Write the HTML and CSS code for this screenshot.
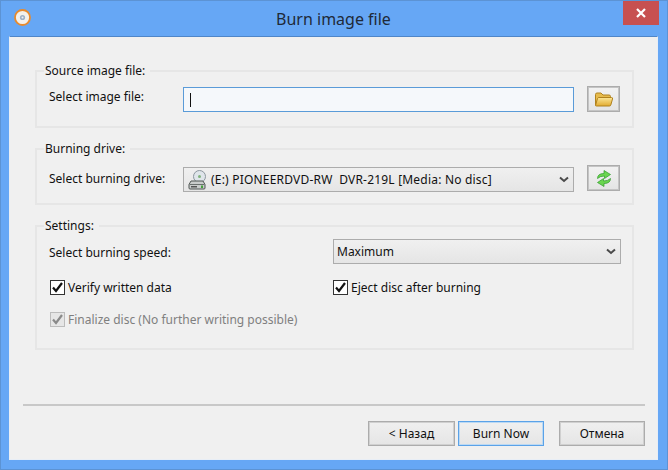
FILE: index.html
```html
<!DOCTYPE html>
<html lang="en">
<head>
<meta charset="utf-8">
<title>Burn image file</title>
<link rel="stylesheet" href="styles.css">
</head>
<body>
<div class="window">
  <header class="titlebar">
    <svg class="app-icon" width="17" height="17" viewBox="0 0 17 17"><circle cx="8.5" cy="8.5" r="7.5" fill="#f4f1ec" stroke="#e88a2c" stroke-width="1.8"/><circle cx="8.5" cy="8.5" r="2.6" fill="#9fb0c6"/><circle cx="8.5" cy="8.5" r="1" fill="#eef2f6"/></svg>
    <h1 class="title">Burn image file</h1>
    <div class="close"><svg width="10" height="10" viewBox="0 0 10 10"><path d="M1 1l8 8M9 1l-8 8" stroke="#fff" stroke-width="2.2"/></svg></div>
  </header>
  <main class="client">
    <fieldset class="group group-source">
      <legend>Source image file:</legend>
      <div class="row">
        <span class="label label-source">Select image file:</span>
        <div class="input"><span class="caret"></span></div>
        <button class="tool tool-browse">
          <svg width="20" height="17" viewBox="0 0 20 17"><defs><linearGradient id="fo" x1="0" y1="0" x2="0" y2="1"><stop offset="0" stop-color="#fbe696"/><stop offset="1" stop-color="#e2ab30"/></linearGradient></defs><path d="M1.500 14V3.500q0-1.500 1.500-1.500h4l2 2h6q1.500 0 1.500 1.500V7z" fill="#e6bb4c" stroke="#b0821e"/><path d="M1.500 14.500L3.500 7.500q.3-1 1.300-1h12.700q1.500 0 1 1.500l-1.700 6q-.3 1-1.300 1H2.500q-1 0-1-.5z" fill="url(#fo)" stroke="#b0821e"/></svg>
        </button>
      </div>
    </fieldset>
    <fieldset class="group group-drive">
      <legend>Burning drive:</legend>
      <div class="row">
        <span class="label label-drive">Select burning drive:</span>
        <div class="select select-drive">
          <svg width="20" height="22" viewBox="0 0 20 22"><circle cx="12.500" cy="7.500" r="6" fill="#dfe5ea" stroke="#8d979f"/><circle cx="12.500" cy="7.500" r="1.500" fill="#7fb37c"/><path d="M2 15.500L4 12h12l2 3.500V19q0 1-1 1H3q-1 0-1-1z" fill="#c9cccb" stroke="#4f5553"/><path d="M2.500 15.500h15" stroke="#6a706e"/><rect x="4" y="17" width="6" height="1.500" fill="#555"/><rect x="14" y="16.500" width="2" height="2.500" fill="#46a13e"/></svg>
          <span class="select-text select-text-drive">(E:) PIONEERDVD-RW&nbsp; DVR-219L [Media: No disc]</span>
          <svg class="chev" width="10" height="7" viewBox="0 0 10 7"><path d="M1 1.500l4 3.500 4-3.500" fill="none" stroke="#4a4a4a" stroke-width="2"/></svg>
        </div>
        <button class="tool tool-refresh">
          <svg width="16" height="19" viewBox="0 0 16 19"><path d="M1.500 9.500Q1.500 4.500 8 4.500V1.500L14.500 5.500 8.500 9.500V7Q4 7 1.500 9.500z" fill="#6ad64f" stroke="#2f9a2b" stroke-width=".7"/><path d="M14.500 9.500Q14.500 14.500 8 14.500v3L1.500 13.500 7.500 9.500V12Q12 12 14.500 9.500z" fill="#6ad64f" stroke="#2f9a2b" stroke-width=".7"/></svg>
        </button>
      </div>
    </fieldset>
    <fieldset class="group group-settings">
      <legend>Settings:</legend>
      <div class="settings">
        <span class="label label-speed">Select burning speed:</span>
        <div class="select select-speed">
          <span class="select-text">Maximum</span>
          <svg class="chev" width="10" height="7" viewBox="0 0 10 7"><path d="M1 1.500l4 3.500 4-3.500" fill="none" stroke="#4a4a4a" stroke-width="2"/></svg>
        </div>
        <div class="check check-verify"><span class="box"><svg width="13" height="13" viewBox="0 0 13 13"><path d="M2 6.500l3 3.500 6-8" fill="none" stroke="#111" stroke-width="2.200"/></svg></span>Verify written data</div>
        <div class="check"><span class="box"><svg width="13" height="13" viewBox="0 0 13 13"><path d="M2 6.500l3 3.500 6-8" fill="none" stroke="#111" stroke-width="2.200"/></svg></span>Eject disc after burning</div>
        <div class="check check-verify check-off"><span class="box"><svg width="13" height="13" viewBox="0 0 13 13"><path d="M2 6.500l3 3.500 6-8" fill="none" stroke="#8a8a8a" stroke-width="2.200"/></svg></span>Finalize disc (No further writing possible)</div>
      </div>
    </fieldset>
    <div class="footer">
      <button class="btn btn-back">&lt; Назад</button>
      <button class="btn btn-default">Burn Now</button>
      <button class="btn btn-cancel">Отмена</button>
    </div>
  </main>
</div>
</body>
</html>
```
FILE: styles.css
```css
* { box-sizing: border-box; }
html, body { margin: 0; height: 100%; }
body { font-family: "Noto Sans", "Open Sans", sans-serif; font-size: 12px; color: #111; }
.window {
  width: 668px; height: 470px; display: flex; flex-direction: column;
  background: #66a7f5; border: 1px solid #5c93d4; padding: 0 9px 9px 8px;
}
.titlebar { height: 35px; flex: none; display: flex; align-items: flex-start; position: relative; }
.app-icon { margin: 8px 0 0 5px; flex: none; }
.title { position: absolute; left: 0; right: 0; top: 7px; margin: 0; text-align: center; font-size: 16px; line-height: 22px; font-weight: 400; color: #1f2a38; }
.close { position: absolute; top: 0; right: -1px; width: 36px; height: 24px; background: #c75050; display: flex; align-items: center; justify-content: center; }
.client {
  flex: 1; background: #f0f0f0; border: 1px solid #fff; border-color: #4f86c8 #e8eef6 #e8eef6 #e8eef6;
  padding: 26px 23px 0 25px; display: flex; flex-direction: column;
}
.group { margin: 0; padding: 0 12px; border: 2px solid #e6e6e6; min-width: 0; }
.group legend { padding: 0 5px 0 1px; margin-left: -5px; line-height: 16px; height: 16px; }
.group-source { height: 65px; }
.group-drive { height: 64px; margin-top: 13px; }
.group-settings { height: 132px; margin-top: 13px; }
.row { display: flex; align-items: flex-start; height: 25px; margin-top: 8px; }
.group-drive .row { margin-top: 10px; }
.label { width: 134px; flex: none; line-height: 16px; }
.label-source { margin-top: 2px; }
.label-drive { margin-top: 4px; }
.input { width: 391px; height: 25px; background: #f5f8fb; border: 1px solid #5a9bd8; display: flex; align-items: center; padding-left: 6px; flex: none; }
.caret { width: 1px; height: 14px; background: #111; }
.select {
  height: 25px; border: 1px solid #acacac; background: linear-gradient(#f0f0f0, #e5e5e5);
  display: flex; align-items: center; padding-left: 3px; gap: 4px; flex: none;
}
.select-drive { width: 391px; }
.select-speed { width: 288px; }
.select-text { flex: 1; }
.select-text-drive { letter-spacing: .2px; }
.chev { margin-right: 4px; }
.tool {
  width: 33px; height: 26px; margin-left: 13px; padding: 0; flex: none;
  border: 1px solid #acacac; background: linear-gradient(#f2f2f2, #e4e4e4);
  display: flex; align-items: center; justify-content: center; outline: 1px solid #c4c4c4; outline-offset: -2px;
}
.tool-browse { margin-top: -1px; }
.tool-refresh { margin-top: -2px; }
.settings { display: grid; grid-template-columns: 284px 288px; grid-auto-rows: 32px; align-items: center; margin-top: 5px; }
.settings .select { margin-top: -7px; }
.settings .label-speed { margin-top: -5px; }
.check { display: flex; align-items: center; gap: 3px; }
.check-verify { margin-left: 1px; }
.box { width: 15px; height: 15px; background: #fff; border: 1px solid #333; display: flex; align-items: center; justify-content: center; flex: none; }
.check-off { grid-column: 1 / 3; color: #7f7f7f; }
.check-off .box { background: #e6e6e6; border-color: #bcbcbc; }
.footer { margin-top: 54px; padding-top: 15px; margin-left: -12px; margin-right: -11px; border-top: 2px solid #c8c8c8; display: flex; justify-content: flex-end; }
.btn { font: inherit; color: #111; height: 25px; padding: 0; border: 1px solid #acacac; background: linear-gradient(#f0f0f0, #e5e5e5); outline: 1px solid #d0d0d0; outline-offset: -2px; }
.btn-back { width: 87px; }
.btn-default { width: 86px; margin-left: 3px; border-color: #5aa2e8; outline-color: #bcd9f3; }
.btn-cancel { width: 86px; margin-left: 15px; }
```
